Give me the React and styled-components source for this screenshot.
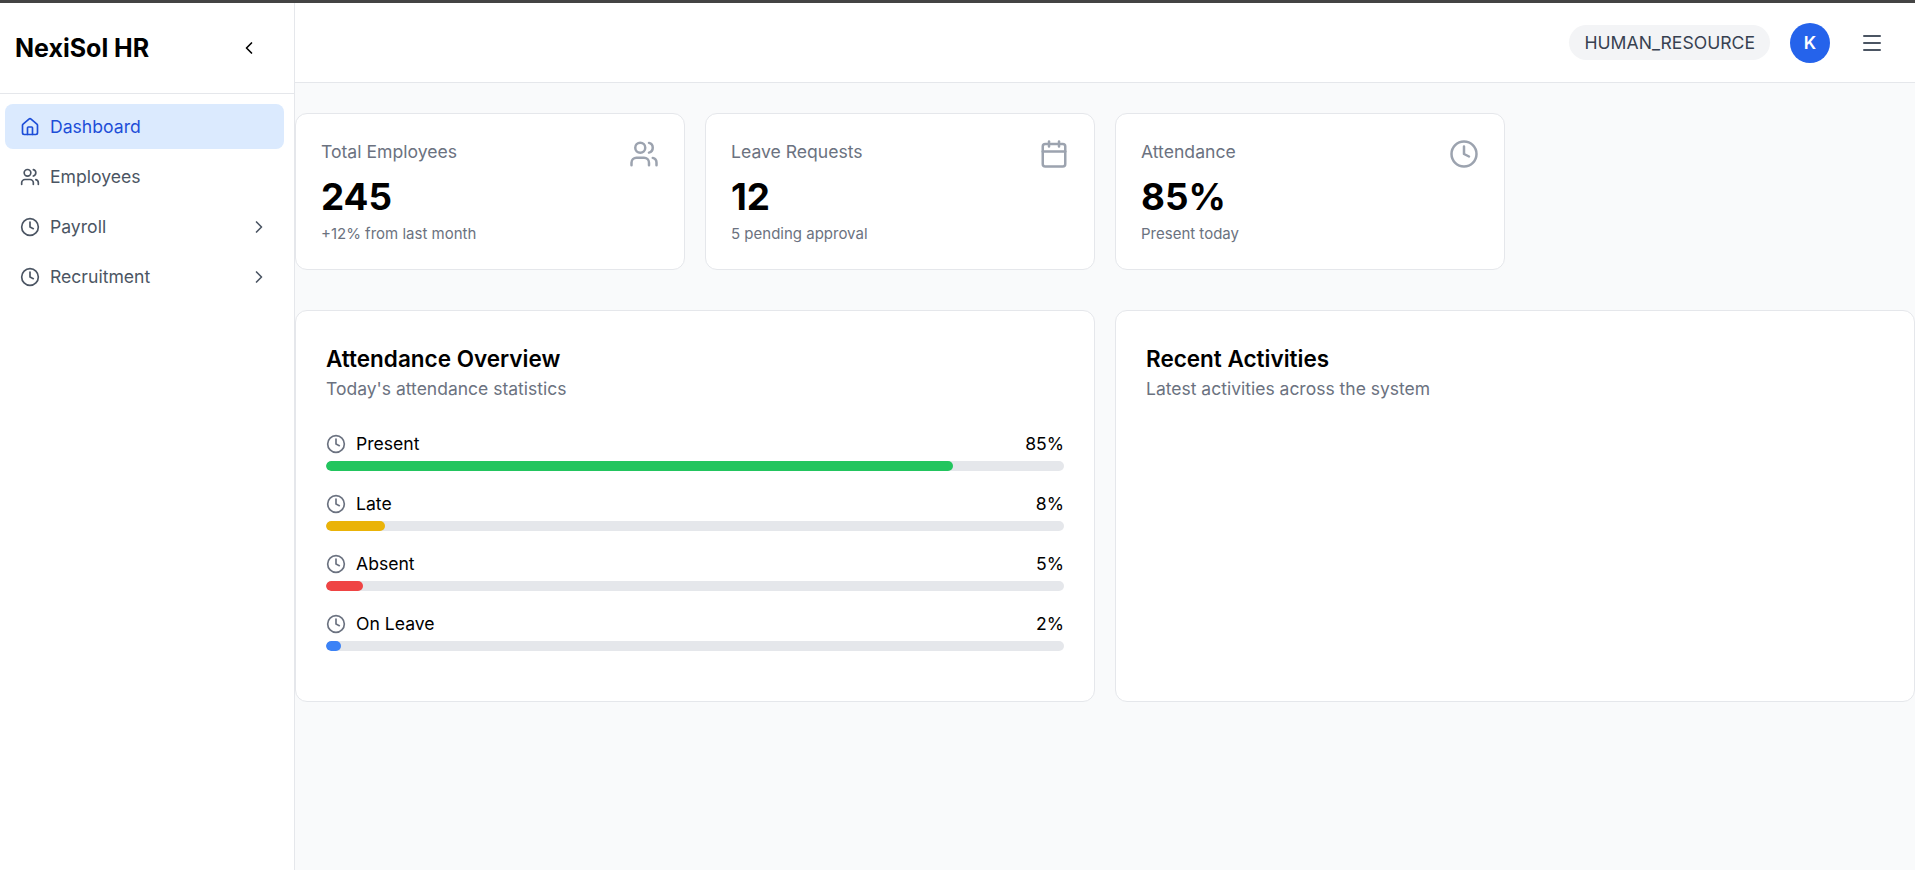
import React from 'react'
import styled, { createGlobalStyle } from 'styled-components'
import { Calendar, ChevronLeft, ChevronRight, Clock, House, Menu, Users } from 'lucide-react'

const GlobalStyle = createGlobalStyle`
  * {
    box-sizing: border-box;
  }

  html, body {
    margin: 0;
    padding: 0;
    font-family: Inter, "Noto Sans", sans-serif;
    background: #f9fafb;
    color: #000;
  }
`

const navItems = [
  { label: 'Dashboard', icon: House, active: true },
  { label: 'Employees', icon: Users },
  { label: 'Payroll', icon: Clock, arrow: true },
  { label: 'Recruitment', icon: Clock, arrow: true },
]

const stats = [
  { label: 'Total Employees', value: '245', note: '+12% from last month', icon: Users },
  { label: 'Leave Requests', value: '12', note: '5 pending approval', icon: Calendar },
  { label: 'Attendance', value: '85%', note: 'Present today', icon: Clock },
]

const attendance = [
  { label: 'Present', percent: 85, color: '#22c55e' },
  { label: 'Late', percent: 8, color: '#eab308' },
  { label: 'Absent', percent: 5, color: '#ef4444' },
  { label: 'On Leave', percent: 2, color: '#3b82f6' },
]

export default function App() {
  return (
    <>
      <GlobalStyle />
      <Page>
        <TopLine />
        <Body>
          <Sidebar>
            <SidebarHead>
              <Logo>NexiSol HR</Logo>
              <CollapseButton>
                <ChevronLeft size={20} />
              </CollapseButton>
            </SidebarHead>
            <Nav>
              {navItems.map((item) => (
                <NavItem key={item.label} $active={item.active}>
                  <item.icon size={20} />
                  <NavLabel>{item.label}</NavLabel>
                  {item.arrow && <ChevronRight size={20} />}
                </NavItem>
              ))}
            </Nav>
          </Sidebar>

          <Main>
            <Header>
              <RoleBadge>HUMAN_RESOURCE</RoleBadge>
              <Avatar>K</Avatar>
              <MenuButton>
                <Menu size={24} />
              </MenuButton>
            </Header>

            <Content>
              <StatsGrid>
                {stats.map((stat) => (
                  <StatCard key={stat.label}>
                    <StatText>
                      <StatLabel>{stat.label}</StatLabel>
                      <StatValue>{stat.value}</StatValue>
                      <StatNote>{stat.note}</StatNote>
                    </StatText>
                    <StatIcon>
                      <stat.icon size={30} />
                    </StatIcon>
                  </StatCard>
                ))}
              </StatsGrid>

              <PanelGrid>
                <Panel>
                  <PanelTitle>Attendance Overview</PanelTitle>
                  <PanelSubtitle>Today's attendance statistics</PanelSubtitle>
                  <Rows>
                    {attendance.map((row) => (
                      <Row key={row.label}>
                        <RowHead>
                          <RowName>
                            <Clock size={20} />
                            {row.label}
                          </RowName>
                          <span>{row.percent}%</span>
                        </RowHead>
                        <Track>
                          <Fill $color={row.color} style={{ width: `${row.percent}%` }} />
                        </Track>
                      </Row>
                    ))}
                  </Rows>
                </Panel>

                <Panel>
                  <PanelTitle>Recent Activities</PanelTitle>
                  <PanelSubtitle>Latest activities across the system</PanelSubtitle>
                </Panel>
              </PanelGrid>
            </Content>
          </Main>
        </Body>
      </Page>
    </>
  )
}

const Page = styled.div`
  display: flex;
  flex-direction: column;
  height: 870px;
  overflow: hidden;
`

const TopLine = styled.div`
  height: 3px;
  flex-shrink: 0;
  background: #444;
`

const Body = styled.div`
  display: flex;
  flex: 1;
  min-height: 0;
`

const Sidebar = styled.aside`
  width: 295px;
  flex-shrink: 0;
  background: #fff;
  border-right: 1px solid #e5e7eb;
`

const SidebarHead = styled.div`
  display: flex;
  align-items: center;
  justify-content: space-between;
  height: 91px;
  padding: 0 35px 0 15px;
  border-bottom: 1px solid #e5e7eb;
`

const Logo = styled.h1`
  margin: 0;
  font-size: 25px;
  font-weight: 700;
`

const CollapseButton = styled.div`
  display: flex;
  color: #000;
`

const Nav = styled.nav`
  display: flex;
  flex-direction: column;
  gap: 5px;
  padding: 10px 10px 0 5px;
`

const NavItem = styled.div`
  display: flex;
  align-items: center;
  gap: 10px;
  height: 45px;
  padding: 0 15px;
  border-radius: 8px;
  font-size: 17.6px;
  color: ${(p) => (p.$active ? '#1d4ed8' : '#4b5563')};
  background: ${(p) => (p.$active ? '#dbeafe' : 'transparent')};
`

const NavLabel = styled.span`
  flex: 1;
`

const Main = styled.main`
  flex: 1;
  min-width: 0;
`

const Header = styled.header`
  display: flex;
  align-items: center;
  justify-content: flex-end;
  height: 80px;
  padding: 0 31px 0 0;
  background: #fff;
  border-bottom: 1px solid #e5e7eb;
`

const RoleBadge = styled.div`
  display: flex;
  align-items: center;
  height: 35px;
  padding: 0 15px;
  border-radius: 18px;
  background: #f3f4f6;
  color: #374151;
  font-size: 17.6px;
`

const Avatar = styled.div`
  display: flex;
  align-items: center;
  justify-content: center;
  width: 40px;
  height: 40px;
  margin-left: 20px;
  border-radius: 50%;
  background: #2563eb;
  color: #fff;
  font-size: 17.6px;
  font-weight: 600;
`

const MenuButton = styled.div`
  display: flex;
  margin-left: 30px;
  color: #4b5563;
`

const Content = styled.div`
  padding: 30px 0 0 0;
`

const StatsGrid = styled.div`
  display: grid;
  grid-template-columns: repeat(4, 1fr);
  gap: 20px;
`

const StatCard = styled.div`
  display: flex;
  justify-content: space-between;
  height: 157px;
  padding: 25px;
  background: #fff;
  border: 1px solid #e5e7eb;
  border-radius: 12px;
`

const StatText = styled.div`
  display: flex;
  flex-direction: column;
`

const StatLabel = styled.div`
  font-size: 17.6px;
  line-height: 26px;
  color: #6b7280;
`

const StatValue = styled.div`
  margin-top: 10px;
  font-size: 36.8px;
  line-height: 44px;
  font-weight: 700;
`

const StatNote = styled.div`
  margin-top: 5px;
  font-size: 15px;
  line-height: 20px;
  color: #6b7280;
`

const StatIcon = styled.div`
  display: flex;
  height: 30px;
  color: #9ca3af;
`

const PanelGrid = styled.div`
  display: grid;
  grid-template-columns: repeat(2, 1fr);
  gap: 20px;
  margin-top: 40px;
`

const Panel = styled.section`
  height: 392px;
  padding: 30px;
  background: #fff;
  border: 1px solid #e5e7eb;
  border-radius: 12px;
`

const PanelTitle = styled.h2`
  margin: 0;
  font-size: 22.5px;
  line-height: 36px;
  font-weight: 600;
`

const PanelSubtitle = styled.p`
  margin: 0;
  font-size: 17.5px;
  line-height: 24px;
  color: #6b7280;
`

const Rows = styled.div`
  margin-top: 30px;
`

const Row = styled.div`
  margin-bottom: 20px;
`

const RowHead = styled.div`
  display: flex;
  align-items: center;
  justify-content: space-between;
  height: 25px;
  margin-bottom: 5px;
  font-size: 17.6px;
`

const RowName = styled.span`
  display: flex;
  align-items: center;
  gap: 10px;

  svg {
    color: #6b7280;
  }
`

const Track = styled.div`
  height: 10px;
  border-radius: 5px;
  background: #e5e7eb;
  overflow: hidden;
`

const Fill = styled.div`
  height: 100%;
  border-radius: 5px;
  background: ${(p) => p.$color};
`
